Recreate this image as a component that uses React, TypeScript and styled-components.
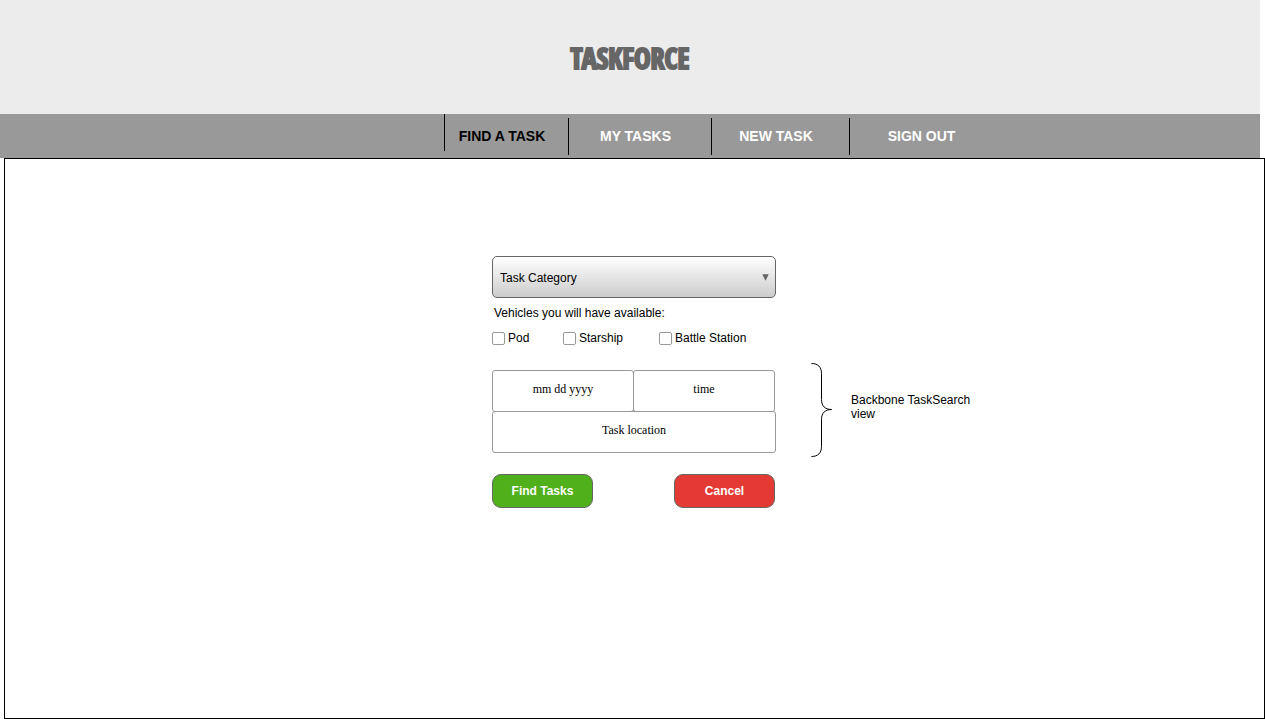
import React from "react";
import styled, { createGlobalStyle } from "styled-components";

const GlobalStyle = createGlobalStyle`
  *, *::before, *::after { box-sizing: border-box; }
  body {
    margin: 0;
    background: #ffffff;
    color: #000000;
    font-family: "Liberation Sans", Arial, sans-serif;
    font-size: 12px;
    line-height: 14px;
  }
`;

const Page = styled.div`
  display: flex;
  flex-direction: column;
  min-height: 100vh;
`;

const Header = styled.header`
  display: flex;
  align-items: center;
  justify-content: center;
  height: 114px;
  margin-right: 5px;
  background: #ececec;
`;

const Logo = styled.h1`
  margin: 0;
  padding-top: 2px;
  color: #666666;
  font-family: Impact, "Noto Sans ExtraCondensed Black", "Noto Sans ExtraCondensed", "Open Sans Condensed", "Roboto Condensed", "Liberation Sans", sans-serif;
  font-size: 28px;
  font-weight: 900;
  line-height: 32px;
  -webkit-text-stroke: 2px #666666;
`;

const Nav = styled.nav`
  display: grid;
  grid-template-columns: 124px 143px 138px 153px;
  height: 44px;
  margin-right: 5px;
  padding-left: calc(50% - 189px);
  background: #999999;
`;

const NavLink = styled.a<{ $active?: boolean }>`
  display: flex;
  align-items: center;
  justify-content: center;
  height: 37px;
  margin-top: ${({ $active }) => ($active ? 0 : 4)}px;
  padding-top: ${({ $active }) => ($active ? 7 : 0)}px;
  padding-right: 8px;
  padding-bottom: ${({ $active }) => ($active ? 0 : 1)}px;
  border-left: 1px solid #000000;
  color: ${({ $active }) => ($active ? "#000000" : "#ffffff")};
  font-size: 14px;
  font-weight: 700;
  line-height: 16px;
  text-decoration: none;
`;

const Main = styled.main`
  display: grid;
  flex: 1;
  grid-template-columns: 1fr 284px 1fr;
  align-items: start;
  margin-left: 4px;
  padding: 97px 1px 40px 0;
  border: 1px solid #000000;
`;

const Form = styled.form`
  display: flex;
  flex-direction: column;
  grid-column: 2;
`;

const SelectBox = styled.div`
  position: relative;
`;

const Select = styled.select`
  appearance: none;
  display: block;
  width: 100%;
  height: 42px;
  padding: 2px 28px 0 7px;
  border: 1px solid #666666;
  border-radius: 5px;
  background: linear-gradient(#ffffff, #cccccc);
  color: #000000;
  font: inherit;
`;

const Arrow = styled.svg`
  position: absolute;
  top: 18px;
  right: 7px;
  pointer-events: none;
`;

const Vehicles = styled.fieldset`
  display: flex;
  margin: 8px 0 0;
  padding: 0;
  border: 0;
`;

const Legend = styled.legend`
  margin: 0 0 11px;
  padding: 0 2px;
`;

const Check = styled.label<{ $width?: number }>`
  display: flex;
  gap: 3px;
  width: ${({ $width }) => ($width ? `${$width}px` : "auto")};
`;

const CheckInput = styled.input`
  appearance: none;
  width: 13px;
  height: 13px;
  margin: 1px 0 0;
  border: 1px solid #999999;
  border-radius: 2px;
  background: #ffffff;
  &:checked { background: #666666; }
`;

const Fields = styled.div`
  display: flex;
  flex-wrap: wrap;
  margin-top: 25px;
`;

const Field = styled.input<{ $wide?: boolean }>`
  width: ${({ $wide }) => ($wide ? 284 : 142)}px;
  height: 42px;
  margin: ${({ $wide }) => ($wide ? "-1px 0 0" : "0 -1px 0 0")};
  padding: 0 2px 4px;
  border: 1px solid #999999;
  border-radius: 3px;
  background: transparent;
  color: #000000;
  font: 12px/14px "Liberation Serif", "Times New Roman", serif;
  text-align: center;
  &::placeholder { color: #000000; opacity: 1; }
`;

const Actions = styled.div`
  display: flex;
  justify-content: space-between;
  margin-top: 21px;
  padding-right: 1px;
`;

const Button = styled.button<{ $color: string }>`
  width: 101px;
  height: 34px;
  padding: 0;
  border: 1px solid #666666;
  border-radius: 9px;
  background: ${({ $color }) => $color};
  color: #ffffff;
  font: inherit;
  font-weight: 700;
`;

const Note = styled.aside`
  display: flex;
  align-items: center;
  gap: 19px;
  margin: 107px 0 0 35px;
`;

const NoteText = styled.p`
  width: 130px;
  margin: 0 0 8px;
`;

export default function App() {
  return (
    <Page>
      <GlobalStyle />
      <Header>
        <Logo>TASKFORCE</Logo>
      </Header>
      <Nav>
        <NavLink href="#find" $active>FIND A TASK</NavLink>
        <NavLink href="#mine">MY TASKS</NavLink>
        <NavLink href="#new">NEW TASK</NavLink>
        <NavLink href="#signout">SIGN OUT</NavLink>
      </Nav>
      <Main>
        <Form onSubmit={(e) => e.preventDefault()}>
          <SelectBox>
            <Select aria-label="Task Category" defaultValue="">
              <option value="">Task Category</option>
            </Select>
            <Arrow width="7" height="7" viewBox="0 0 7 7" aria-hidden="true">
              <path d="M0.3 0.3H6.7L3.5 6.8Z" fill="#666666" />
            </Arrow>
          </SelectBox>
          <Vehicles>
            <Legend>Vehicles you will have available:</Legend>
            <Check $width={71}><CheckInput type="checkbox" />Pod</Check>
            <Check $width={96}><CheckInput type="checkbox" />Starship</Check>
            <Check><CheckInput type="checkbox" />Battle Station</Check>
          </Vehicles>
          <Fields>
            <Field aria-label="Date" placeholder="mm dd yyyy" />
            <Field aria-label="Time" placeholder="time" />
            <Field aria-label="Task location" placeholder="Task location" $wide />
          </Fields>
          <Actions>
            <Button type="submit" $color="#50b01c">Find Tasks</Button>
            <Button type="button" $color="#e33a34">Cancel</Button>
          </Actions>
        </Form>
        <Note>
          <svg width="21" height="95" viewBox="0 0 21 95" fill="none" stroke="#000000" aria-hidden="true">
            <path d="M0.5 0.5C7 0.5 10.5 4 10.5 10.5V36.5C10.5 43 14 46.5 20.5 46.5C14 46.5 10.5 50 10.5 56.5V83.5C10.5 90 7 93.5 0.5 93.5" />
          </svg>
          <NoteText>Backbone TaskSearch view</NoteText>
        </Note>
      </Main>
    </Page>
  );
}
